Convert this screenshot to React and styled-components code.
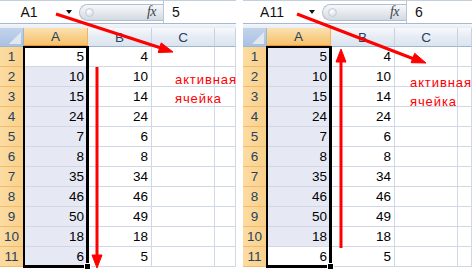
import React from 'react'
import styled, {createGlobalStyle} from 'styled-components'

const GlobalStyle = createGlobalStyle`
  html, body { margin: 0; padding: 0; background: #fff; overflow: hidden; }
  body { font-family: "Liberation Sans", Arial, sans-serif; }
`

const colA = [5, 10, 15, 24, 7, 8, 35, 46, 50, 18, 6]
const colB = [4, 10, 14, 24, 6, 8, 34, 46, 49, 18, 5]

const panels = [
  {name: 'A1', value: '5', active: 0, width: 236, dir: 'down', note: {left: 175, top: 70}},
  {name: 'A11', value: '6', active: 10, width: 229, dir: 'up', note: {left: 167, top: 73}},
]

const Arrows = ({dir}) => (
  <ArrowLayer width="240" height="269" viewBox="0 0 240 269">
    {dir === 'down' ? (
      <g fill="#ff0000" stroke="#ff0000">
        <line x1="56" y1="14" x2="161" y2="48" strokeWidth="3" />
        <polygon points="173,52 158.2,52.5 161.2,42.9" strokeWidth="1" />
        <line x1="97" y1="67" x2="97" y2="257" strokeWidth="3" />
        <polygon points="97,268 92,255 102,255" strokeWidth="1" />
      </g>
    ) : (
      <g fill="#ff0000" stroke="#ff0000">
        <line x1="54" y1="14" x2="171" y2="59" strokeWidth="3" />
        <polygon points="183,63 168.1,62.7 171.7,53.3" strokeWidth="1" />
        <line x1="98" y1="248" x2="98" y2="60" strokeWidth="3" />
        <polygon points="98,49 93,62 103,62" strokeWidth="1" />
      </g>
    )}
  </ArrowLayer>
)

const Panel = ({p}) => (
  <PanelBox $w={p.width}>
    <FormulaBar>
      <NameBox>{p.name}</NameBox>
      <Dropdown />
      <FxPill>
        <Knob />
        <Fx>fx</Fx>
      </FxPill>
      <FormulaValue>{p.value}</FormulaValue>
    </FormulaBar>
    <Strip />
    <Sheet>
      <Corner><CornerTri /></Corner>
      <ColHead $sel>A</ColHead>
      <ColHead>B</ColHead>
      <ColHead>C</ColHead>
      <ColHead />
      {colA.map((a, i) => (
        <React.Fragment key={i}>
          <RowHead>{i + 1}</RowHead>
          <Cell $sel={i !== p.active}>{a}</Cell>
          <Cell>{colB[i]}</Cell>
          <Cell />
          <Cell />
        </React.Fragment>
      ))}
      <Selection><FillHandle /></Selection>
    </Sheet>
    <Note style={{left: p.note.left, top: p.note.top}}>
      активная<br />ячейка
    </Note>
    <Arrows dir={p.dir} />
  </PanelBox>
)

export default function App() {
  return (
    <>
      <GlobalStyle />
      <Page>
        {panels.map((p) => <Panel key={p.name} p={p} />)}
      </Page>
    </>
  )
}

const Page = styled.div`
display: flex;
gap: 7px;
width: 472px;
height: 269px;
overflow: hidden;
`

const PanelBox = styled.div`
position: relative;
flex: 0 0 ${p => p.$w}px;
width: ${p => p.$w}px;
height: 269px;
overflow: hidden;
`

const FormulaBar = styled.div`
display: flex;
align-items: center;
height: 22px;
border-top: 1px solid #c3cfdd;
border-bottom: 1px solid #a7b9cf;
background: #fff;
`

const NameBox = styled.div`
width: 58px;
text-align: center;
font-size: 14px;
color: #111;
`

const Dropdown = styled.div`
width: 0;
height: 0;
margin-left: 8px;
border-left: 3.5px solid transparent;
border-right: 3.5px solid transparent;
border-top: 4px solid #111;
`

const FxPill = styled.div`
position: relative;
display: flex;
align-items: center;
justify-content: flex-end;
margin-left: 7px;
width: 84px;
height: 17px;
box-sizing: border-box;
border: 1px solid #b4bfcd;
border-right: none;
border-radius: 9px 0 0 9px;
background: linear-gradient(#f7f8fa, #e4e8ee 55%, #d3d9e2);
`

const Knob = styled.div`
position: absolute;
left: 5px;
top: 3px;
width: 9px;
height: 9px;
border-radius: 50%;
background: radial-gradient(circle at 40% 35%, #fff, #cfd6df);
border: 1px solid #c5cdd8;
box-sizing: border-box;
`

const Fx = styled.span`
margin-right: 7px;
font-family: "Liberation Serif", "Times New Roman", serif;
font-style: italic;
font-size: 14px;
color: #444;
letter-spacing: -0.5px;
`

const FormulaValue = styled.div`
flex: 1;
align-self: stretch;
display: flex;
align-items: center;
padding-left: 8px;
border-left: 1px solid #b9c6d6;
font-size: 14px;
color: #111;
`

const Strip = styled.div`
height: 4px;
background: linear-gradient(#f4f6fa, #e9eef5);
`

const Sheet = styled.div`
position: relative;
display: grid;
grid-template-columns: 24px 64px 64px 63px 1fr;
grid-template-rows: 19px repeat(11, 20px);
font-size: 13.5px;
`

const Corner = styled.div`
position: relative;
box-sizing: border-box;
background: linear-gradient(#c2d4ec, #a9c1e2);
border-right: 1px solid #9eb6ce;
border-bottom: 1px solid #9eb6ce;
`

const CornerTri = styled.div`
position: absolute;
right: 2px;
bottom: 2px;
width: 0;
height: 0;
border-left: 12px solid transparent;
border-bottom: 12px solid #e2e8f0;
`

const ColHead = styled.div`
box-sizing: border-box;
display: flex;
align-items: center;
justify-content: center;
color: #27415f;
background: ${p => p.$sel
  ? 'linear-gradient(#fbe2b2, #f8d08c 50%, #f5c26a)'
  : 'linear-gradient(#f7f9fc, #e6ecf4 50%, #dbe4ef)'};
border-right: 1px solid ${p => p.$sel ? '#f2b35a' : '#c5d3e3'};
border-bottom: ${p => p.$sel ? '2px solid #f29436' : '1px solid #9eb6ce'};
`

const RowHead = styled.div`
box-sizing: border-box;
display: flex;
align-items: center;
justify-content: center;
color: #27415f;
background: linear-gradient(90deg, #fcdca2, #f9d08a);
border-right: 1px solid #f29436;
border-bottom: 1px solid #f0bb6c;
`

const Cell = styled.div`
box-sizing: border-box;
display: flex;
align-items: center;
justify-content: flex-end;
padding-right: 3px;
color: #000;
background: ${p => p.$sel ? '#e6e9f4' : '#fff'};
border-right: 1px solid #d0d7e5;
border-bottom: 1px solid #d0d7e5;
`

const Selection = styled.div`
position: absolute;
left: 23px;
top: 18px;
width: 66px;
height: 222px;
box-sizing: border-box;
border: 2px solid #000;
border-right-width: 3px;
border-bottom-width: 3px;
pointer-events: none;
`

const FillHandle = styled.div`
position: absolute;
right: -5px;
bottom: -5px;
width: 5px;
height: 5px;
background: #000;
border: 1px solid #fff;
`

const Note = styled.div`
position: absolute;
color: #ff0000;
font-size: 13px;
line-height: 19px;
letter-spacing: 0.9px;
white-space: nowrap;
`

const ArrowLayer = styled.svg`
position: absolute;
left: 0;
top: 0;
pointer-events: none;
`
